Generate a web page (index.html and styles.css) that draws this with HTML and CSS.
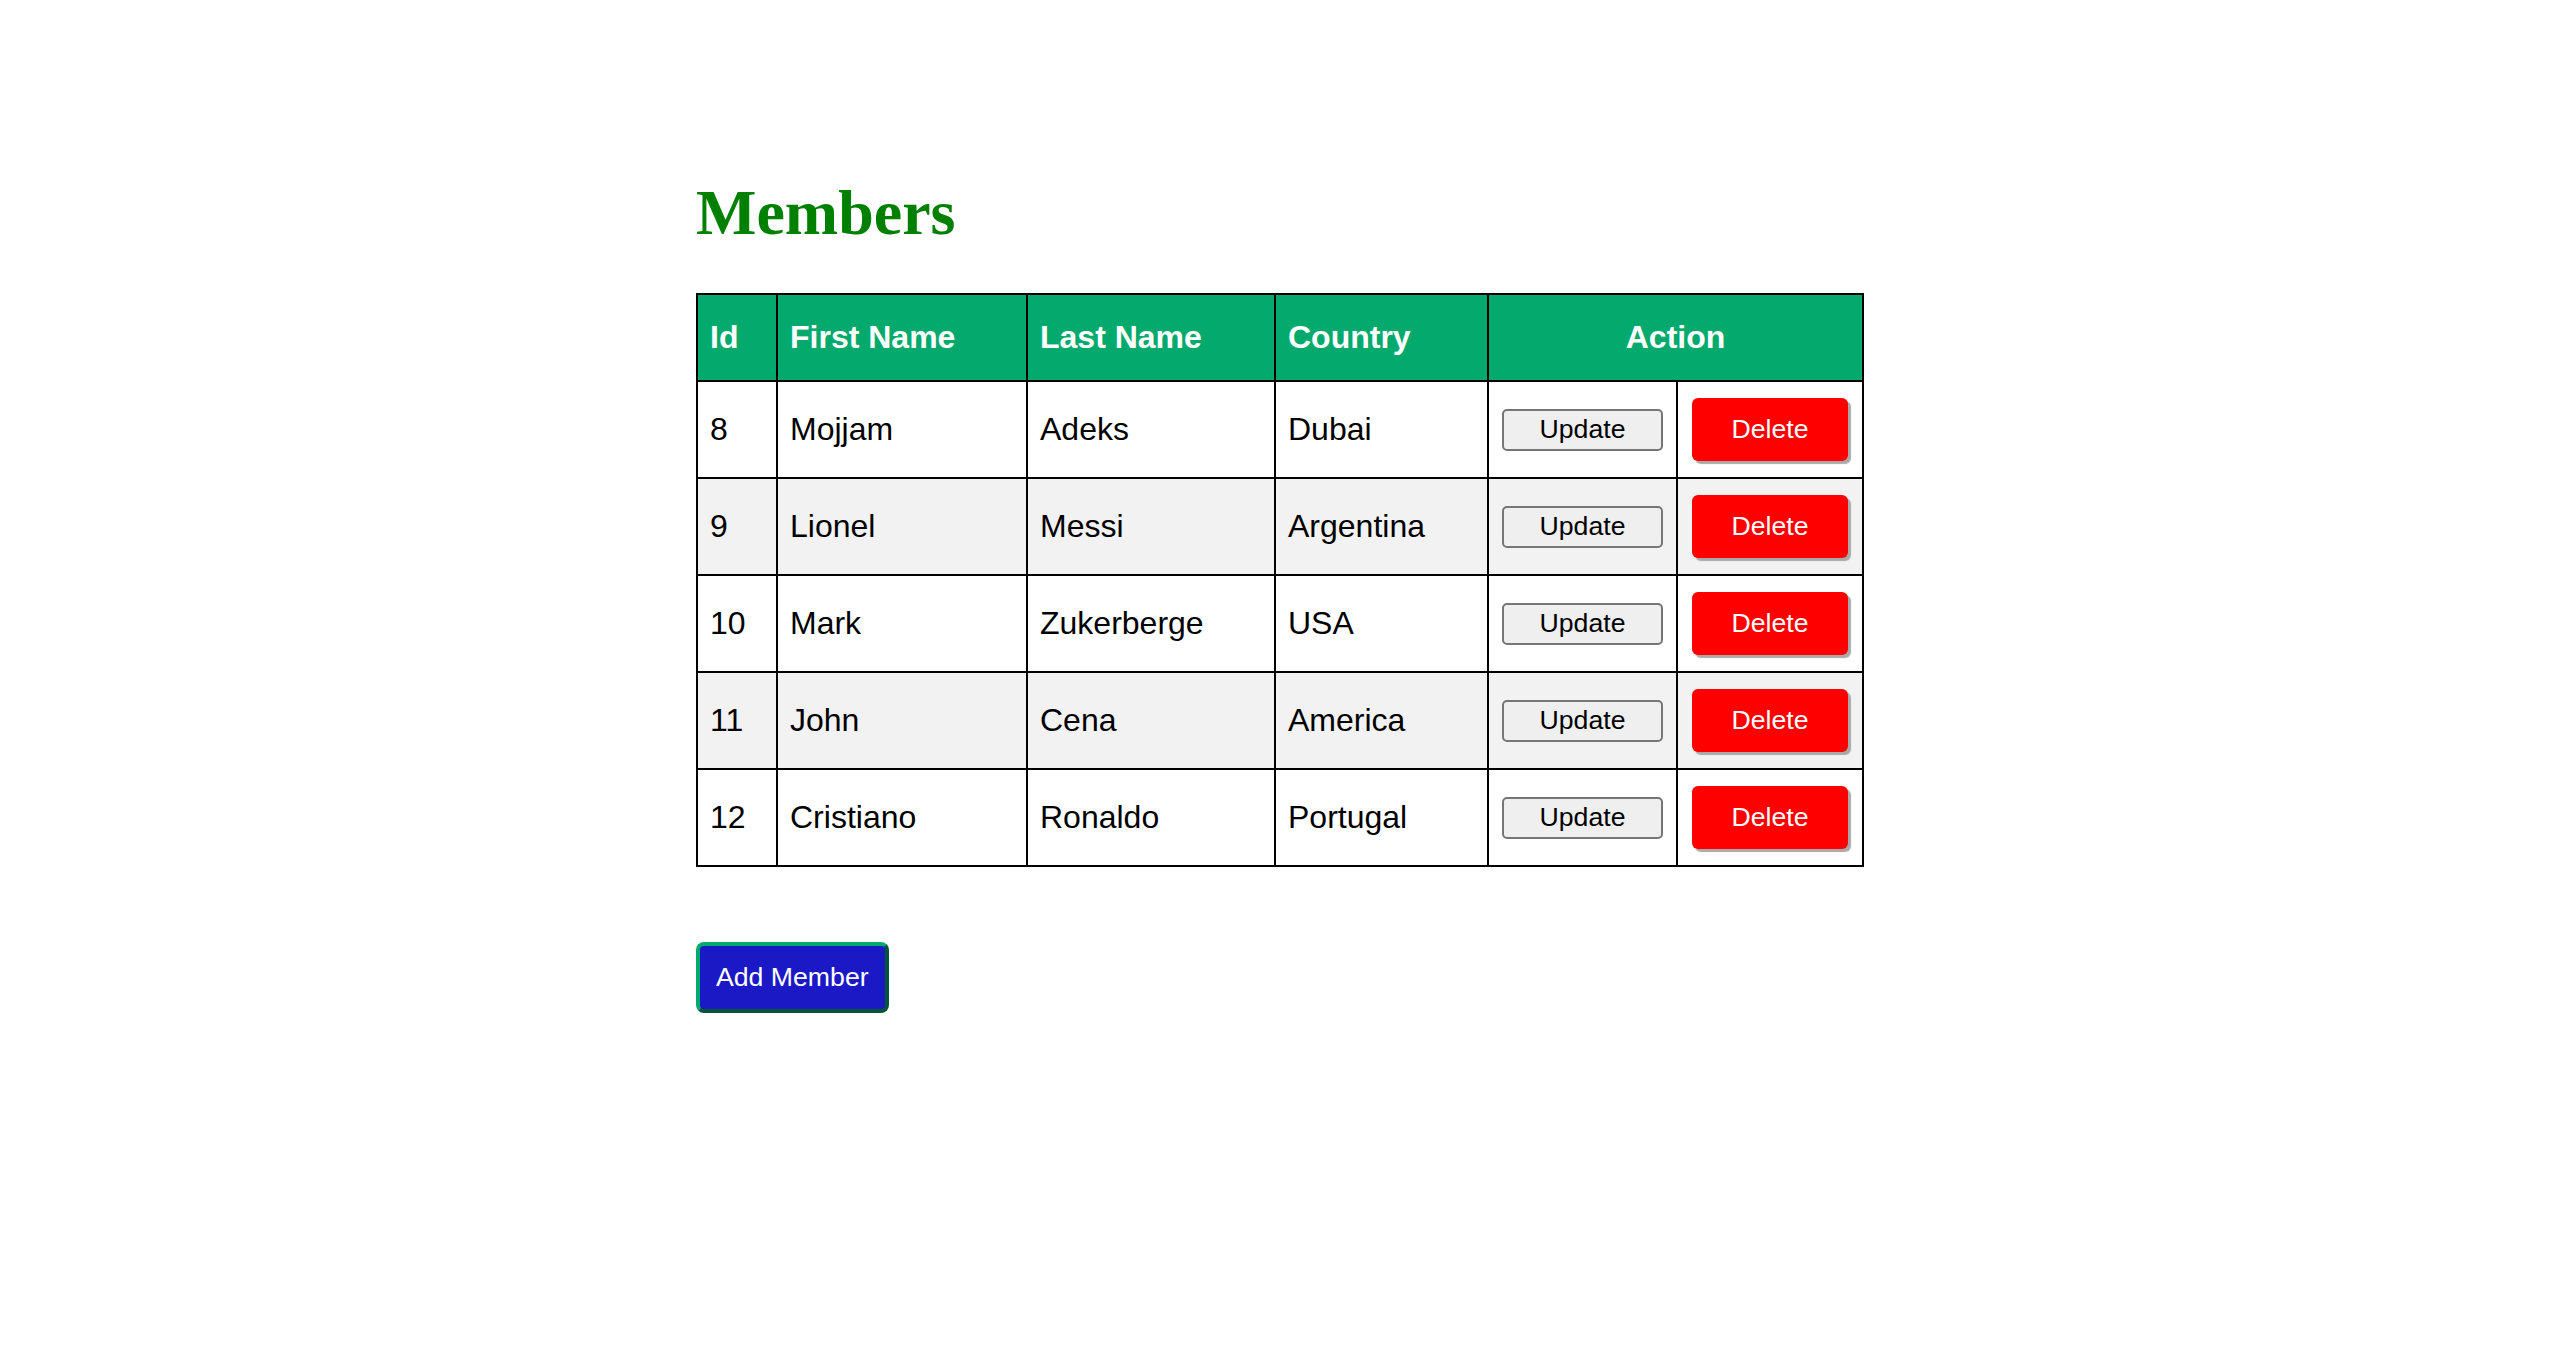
FILE: index.html
```html
<!DOCTYPE html>
<html lang="en">
<head>
<meta charset="utf-8">
<title>Members</title>
<link rel="stylesheet" href="styles.css">
</head>
<body>
<div class="page">
  <h1 class="title">Members</h1>
  <table class="members">
    <colgroup>
      <col class="c-id">
      <col class="c-first">
      <col class="c-last">
      <col class="c-country">
      <col class="c-update">
      <col class="c-delete">
    </colgroup>
    <thead>
      <tr>
        <th>Id</th>
        <th>First Name</th>
        <th>Last Name</th>
        <th>Country</th>
        <th colspan="2" class="center">Action</th>
      </tr>
    </thead>
    <tbody>
      <tr>
        <td>8</td><td>Mojjam</td><td>Adeks</td><td>Dubai</td>
        <td class="center"><button class="btn-update">Update</button></td>
        <td class="center"><button class="btn-delete">Delete</button></td>
      </tr>
      <tr>
        <td>9</td><td>Lionel</td><td>Messi</td><td>Argentina</td>
        <td class="center"><button class="btn-update">Update</button></td>
        <td class="center"><button class="btn-delete">Delete</button></td>
      </tr>
      <tr>
        <td>10</td><td>Mark</td><td>Zukerberge</td><td>USA</td>
        <td class="center"><button class="btn-update">Update</button></td>
        <td class="center"><button class="btn-delete">Delete</button></td>
      </tr>
      <tr>
        <td>11</td><td>John</td><td>Cena</td><td>America</td>
        <td class="center"><button class="btn-update">Update</button></td>
        <td class="center"><button class="btn-delete">Delete</button></td>
      </tr>
      <tr>
        <td>12</td><td>Cristiano</td><td>Ronaldo</td><td>Portugal</td>
        <td class="center"><button class="btn-update">Update</button></td>
        <td class="center"><button class="btn-delete">Delete</button></td>
      </tr>
    </tbody>
  </table>
  <div class="actions">
    <button class="btn-add">Add Member</button>
  </div>
</div>
</body>
</html>
```

FILE: styles.css
```css
html, body {
  margin: 0;
  padding: 0;
  background: #ffffff;
}

body {
  font-family: "Liberation Sans", Arial, sans-serif;
  color: #000000;
}

.page {
  width: 1168px;
  margin: 0 auto;
  padding-top: 176px;
}

.title {
  font-family: "Liberation Serif", "Times New Roman", serif;
  font-size: 64px;
  font-weight: bold;
  line-height: normal;
  color: #008000;
  margin: 0 0 43px 0;
}

.members {
  width: 1168px;
  table-layout: fixed;
  border-collapse: collapse;
  font-size: 32px;
}

.c-id { width: 80px; }
.c-first { width: 250px; }
.c-last { width: 248px; }
.c-country { width: 213px; }
.c-update { width: 189px; }
.c-delete { width: 186px; }

.members th,
.members td {
  border: 2px solid #000000;
  text-align: left;
  vertical-align: middle;
  line-height: normal;
}

.members th {
  background: #04aa6d;
  color: #ffffff;
  font-weight: bold;
  padding: 24px 12px;
}

.members td {
  padding: 16px 12px;
}

.members tbody tr:nth-child(even) td {
  background: #f2f2f2;
}

.members .center {
  text-align: center;
}

.btn-update {
  font-family: "Liberation Sans", Arial, sans-serif;
  font-size: 26.67px;
  line-height: normal;
  width: 161px;
  height: 42px;
  padding: 0;
  color: #000000;
  background: #efefef;
  border: 2px solid #767676;
  border-radius: 5px;
  vertical-align: middle;
}

.btn-delete {
  font-family: "Liberation Sans", Arial, sans-serif;
  font-size: 26.67px;
  line-height: 31px;
  padding: 16px 39px;
  color: #ffffff;
  background: #ff0000;
  border: none;
  border-radius: 6px;
  box-shadow: 3px 3px 1px #a9a9a9;
  vertical-align: middle;
}

.actions {
  display: flex;
  margin-top: 75px;
}

.btn-add {
  font-family: "Liberation Sans", Arial, sans-serif;
  font-size: 26.67px;
  line-height: normal;
  padding: 16px;
  color: #ffffff;
  background: #1b18c6;
  border: 4px outset #04aa6d;
  border-radius: 8px;
}
```
